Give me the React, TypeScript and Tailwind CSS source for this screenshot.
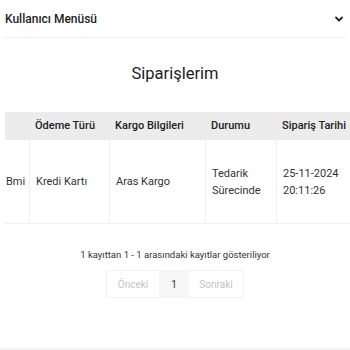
import React from "react";

export default function App() {
  return (
    <div
      className="w-[350px] h-[350px] bg-white overflow-hidden flex flex-col text-[#222]"
      style={{ fontFamily: "Roboto, 'Noto Sans', sans-serif" }}
    >
      <div className="mx-[5px] h-[38px] flex items-center justify-between border-b border-[#f0f0f0]">
        <span className="text-[12px] font-medium text-[#222]">Kullanıcı Menüsü</span>
        <svg width="10" height="10" viewBox="0 0 10 10" className="mr-[1px]">
          <path d="M2 3.5 L5 6.5 L8 3.5" fill="none" stroke="#222" strokeWidth="1.8" strokeLinecap="round" strokeLinejoin="round" />
        </svg>
      </div>

      <div className="h-[74px] flex items-center justify-center pb-[2px]">
        <h1 className="text-[16.5px] text-[#222] leading-none">Siparişlerim</h1>
      </div>

      <div className="pl-[5px] overflow-hidden">
        <div className="w-[420px]">
          <div className="flex h-[28px] bg-[#ececec] items-center text-[11px] font-medium text-[#222]">
            <div className="w-[24px] shrink-0" />
            <div className="w-[80px] shrink-0 pl-[6px]">Ödeme Türü</div>
            <div className="w-[96px] shrink-0 pl-[6px]">Kargo Bilgileri</div>
            <div className="w-[71px] shrink-0 pl-[6px]">Durumu</div>
            <div className="w-[120px] shrink-0 pl-[6px] whitespace-nowrap">Sipariş Tarihi</div>
          </div>
          <div className="flex h-[84px] border-b border-[#f0f0f0] text-[11px] text-[#333] leading-[17px]">
            <div className="w-[24px] shrink-0 flex items-center pl-[1px]">Bmi</div>
            <div className="w-[80px] shrink-0 pl-[6px] flex items-center border-l border-[#f0f0f0]">Kredi Kartı</div>
            <div className="w-[96px] shrink-0 pl-[6px] flex items-center border-l border-[#f0f0f0]">Aras Kargo</div>
            <div className="w-[71px] shrink-0 pl-[6px] flex items-center border-l border-[#f0f0f0]">
              <span>Tedarik<br />Sürecinde</span>
            </div>
            <div className="w-[120px] shrink-0 pl-[6px] flex items-center border-l border-[#f0f0f0]">
              <span>25-11-2024<br />20:11:26</span>
            </div>
          </div>
        </div>
      </div>

      <div className="mt-[23px] text-center text-[9.5px] text-[#333] leading-[16px]">
        1 kayıttan 1 - 1 arasındaki kayıtlar gösteriliyor
      </div>

      <div className="mt-[7px] flex justify-center">
        <div className="flex h-[28px] border border-[#f2f2f2] text-[10px]">
          <div className="w-[52px] flex items-center justify-center text-[#c4c4c4]">Önceki</div>
          <div className="w-[30px] flex items-center justify-center bg-[#f6f6f6] text-[#333]">1</div>
          <div className="w-[54px] flex items-center justify-center text-[#c4c4c4]">Sonraki</div>
        </div>
      </div>

      <div className="flex-1" />
      <div className="h-[2px] bg-[#f6f6f6]" />
    </div>
  );
}
